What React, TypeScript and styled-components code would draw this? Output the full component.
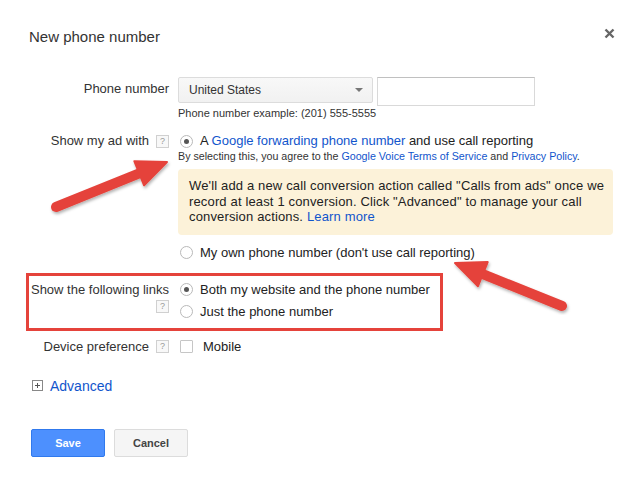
import React from 'react'
import styled, { createGlobalStyle } from 'styled-components'

const GlobalStyle = createGlobalStyle`
  html, body {
    margin: 0;
    padding: 0;
    background: #fff;
  }
  body {
    font-family: "Liberation Sans", Arial, sans-serif;
    color: #222;
  }
`

const Dialog = styled.div`
  position: relative;
  width: 640px;
  height: 486px;
  box-sizing: border-box;
  padding: 28px 0 0 29px;
  overflow: hidden;
`

const Header = styled.div`
  display: flex;
  justify-content: space-between;
  align-items: flex-start;
  padding-right: 25px;
`

const Title = styled.h1`
  margin: 0;
  font-size: 15px;
  line-height: 18px;
  font-weight: normal;
  color: #333;
`

const Close = styled.button`
  border: 0;
  background: none;
  padding: 0;
  width: 11px;
  height: 11px;
  display: flex;
  cursor: pointer;
`

const Row = styled.div<{ $top: number; $marked?: boolean }>`
  display: grid;
  grid-template-columns: 140px auto;
  column-gap: 9px;
  align-items: start;
  margin-top: ${({ $top }) => $top}px;
  ${({ $marked }) =>
    $marked &&
    `
    width: fit-content;
    margin-left: -3px;
    padding: 6px 10px 8px 0;
    border: 3px solid #e5433b;
  `}
`

const Label = styled.div<{ $stack?: boolean; $pad?: number }>`
  display: flex;
  flex-direction: ${({ $stack }) => ($stack ? 'column' : 'row')};
  justify-content: flex-end;
  align-items: ${({ $stack }) => ($stack ? 'flex-end' : 'center')};
  gap: ${({ $stack }) => ($stack ? 2 : 7)}px;
  padding-top: ${({ $pad }) => $pad ?? 0}px;
  font-size: 13px;
  line-height: 16px;
  color: #333;
  white-space: nowrap;
`

const Help = styled.span`
  display: inline-flex;
  align-items: center;
  justify-content: center;
  width: 11px;
  height: 11px;
  border: 1px solid #d0d0d0;
  background: #f8f8f8;
  color: #999;
  font-size: 9px;
  line-height: 1;
`

const Controls = styled.div`
  display: flex;
  flex-direction: column;
`

const PhoneInputs = styled.div`
  display: flex;
  gap: 4px;
  align-items: flex-start;
`

const Select = styled.div`
  box-sizing: border-box;
  width: 195px;
  height: 26px;
  display: flex;
  align-items: center;
  justify-content: space-between;
  padding: 0 9px 0 10px;
  border: 1px solid #dcdcdc;
  border-radius: 2px;
  background: linear-gradient(#f8f8f8, #f1f1f1);
  font-size: 12px;
  color: #333;
`

const Caret = styled.span`
  width: 0;
  height: 0;
  border-left: 4px solid transparent;
  border-right: 4px solid transparent;
  border-top: 4px solid #777;
`

const TextInput = styled.div`
  box-sizing: border-box;
  width: 158px;
  height: 29px;
  border: 1px solid #d9d9d9;
  border-top-color: #c0c0c0;
  background: #fff;
`

const Hint = styled.div<{ $top: number; $size?: number }>`
  margin-top: ${({ $top }) => $top}px;
  font-size: ${({ $size }) => $size ?? 11}px;
  line-height: 14px;
  color: #333;
  white-space: nowrap;
`

const Option = styled.label<{ $top?: number }>`
  display: flex;
  align-items: center;
  gap: 7px;
  margin-top: ${({ $top }) => $top ?? 0}px;
  padding-left: 2px;
  font-size: 13px;
  line-height: 16px;
  color: #222;
  white-space: nowrap;
`

const Radio = styled.span<{ $on?: boolean }>`
  box-sizing: border-box;
  width: 13px;
  height: 13px;
  border-radius: 50%;
  border: 1px solid #b9b9b9;
  background: #fff;
  display: flex;
  align-items: center;
  justify-content: center;
  &::after {
    content: '';
    width: 5px;
    height: 5px;
    border-radius: 50%;
    background: ${({ $on }) => ($on ? '#555' : 'transparent')};
  }
`

const Checkbox = styled.span`
  box-sizing: border-box;
  width: 13px;
  height: 13px;
  border: 1px solid #c6c6c6;
  border-radius: 1px;
  background: #fff;
`

const Link = styled.a`
  color: #1155cc;
  text-decoration: none;
`

const Notice = styled.div`
  box-sizing: border-box;
  width: 435px;
  margin-top: 6px;
  padding: 9px 8px 10px 11px;
  border-radius: 4px;
  background: #fcf2d9;
  font-size: 13px;
  line-height: 15.5px;
  color: #222;
  letter-spacing: 0.15px;
  white-space: nowrap;
`

const Advanced = styled.div`
  display: flex;
  align-items: center;
  gap: 7px;
  margin: 23px 0 0 3px;
  font-size: 14px;
  line-height: 16px;
`

const Plus = styled.span`
  box-sizing: border-box;
  width: 11px;
  height: 11px;
  border: 1px solid #888;
  position: relative;
  &::before,
  &::after {
    content: '';
    position: absolute;
    background: #555;
  }
  &::before {
    left: 2px;
    right: 2px;
    top: 4px;
    height: 1px;
  }
  &::after {
    top: 2px;
    bottom: 2px;
    left: 4px;
    width: 1px;
  }
`

const Buttons = styled.div`
  display: flex;
  gap: 9px;
  margin: 35px 0 0 2px;
`

const Button = styled.button<{ $primary?: boolean }>`
  box-sizing: border-box;
  width: 74px;
  height: 28px;
  border-radius: 2px;
  border: 1px solid ${({ $primary }) => ($primary ? '#3079ed' : '#dcdcdc')};
  background: ${({ $primary }) => ($primary ? '#4d90fe' : '#f5f5f5')};
  color: ${({ $primary }) => ($primary ? '#fff' : '#444')};
  font-family: "Liberation Sans", Arial, sans-serif;
  font-size: 11px;
  font-weight: bold;
  padding: 0;
`

const Annotations = styled.svg`
  position: absolute;
  left: 0;
  top: 0;
  pointer-events: none;
`

type Pt = [number, number]

// red callout arrow: rounded shaft with a triangle head, tip is where it points
const Arrow = ({ tail, tip }: { tail: Pt; tip: Pt }) => {
  const dx = tip[0] - tail[0]
  const dy = tip[1] - tail[1]
  const len = Math.hypot(dx, dy)
  const ux = dx / len
  const uy = dy / len
  const bx = tip[0] - ux * 30
  const by = tip[1] - uy * 30
  const w1 = `${bx - uy * 13},${by + ux * 13}`
  const w2 = `${bx + uy * 13},${by - ux * 13}`
  return (
    <g filter="url(#shade)">
      <line x1={tail[0]} y1={tail[1]} x2={bx + ux * 2} y2={by + uy * 2} stroke="#e5433b" strokeWidth={10} strokeLinecap="round" />
      <polygon points={`${tip[0]},${tip[1]} ${w1} ${w2}`} fill="#e5433b" strokeLinejoin="round" stroke="#e5433b" strokeWidth={2} />
    </g>
  )
}

export default function App() {
  return (
    <>
      <GlobalStyle />
      <Dialog>
        <Header>
          <Title>New phone number</Title>
          <Close aria-label="Close">
            <svg width="11" height="11" viewBox="0 0 11 11">
              <path d="M1.5 1.5 L9.5 9.5 M9.5 1.5 L1.5 9.5" stroke="#666" strokeWidth="2.4" />
            </svg>
          </Close>
        </Header>

        <Row $top={31}>
          <Label $pad={4}>Phone number</Label>
          <Controls>
            <PhoneInputs>
              <Select>
                United States
                <Caret />
              </Select>
              <TextInput />
            </PhoneInputs>
            <Hint $top={0}>Phone number example: (201) 555-5555</Hint>
          </Controls>
        </Row>

        <Row $top={13}>
          <Label>
            Show my ad with <Help>?</Help>
          </Label>
          <Controls>
            <Option>
              <Radio $on />
              <span>
                A <Link>Google forwarding phone number</Link> and use call reporting
              </span>
            </Option>
            <Hint $top={0} $size={10.7}>
              By selecting this, you agree to the <Link>Google Voice Terms of Service</Link> and{' '}
              <Link>Privacy Policy</Link>.
            </Hint>
            <Notice>
              We'll add a new call conversion action called "Calls from ads" once we
              <br />
              record at least 1 conversion. Click "Advanced" to manage your call
              <br />
              conversion actions. <Link>Learn more</Link>
            </Notice>
            <Option $top={10}>
              <Radio />
              My own phone number (don't use call reporting)
            </Option>
          </Controls>
        </Row>

        <Row $top={12} $marked>
          <Label $stack>
            Show the following links
            <Help>?</Help>
          </Label>
          <Controls>
            <Option>
              <Radio $on />
              Both my website and the phone number
            </Option>
            <Option $top={6}>
              <Radio />
              Just the phone number
            </Option>
          </Controls>
        </Row>

        <Row $top={8}>
          <Label>
            Device preference <Help>?</Help>
          </Label>
          <Option>
            <Checkbox />
            <span style={{ marginLeft: 3 }}>Mobile</span>
          </Option>
        </Row>

        <Advanced>
          <Plus />
          <Link>Advanced</Link>
        </Advanced>

        <Buttons>
          <Button $primary>Save</Button>
          <Button>Cancel</Button>
        </Buttons>

        <Annotations width="640" height="486">
          <defs>
            <filter id="shade" x="-20%" y="-20%" width="140%" height="140%">
              <feDropShadow dx="1" dy="2" stdDeviation="1.5" floodColor="#000" floodOpacity="0.3" />
            </filter>
          </defs>
          <Arrow tail={[56, 207]} tip={[167, 162]} />
          <Arrow tail={[562, 306]} tip={[455, 263]} />
        </Annotations>
      </Dialog>
    </>
  )
}
